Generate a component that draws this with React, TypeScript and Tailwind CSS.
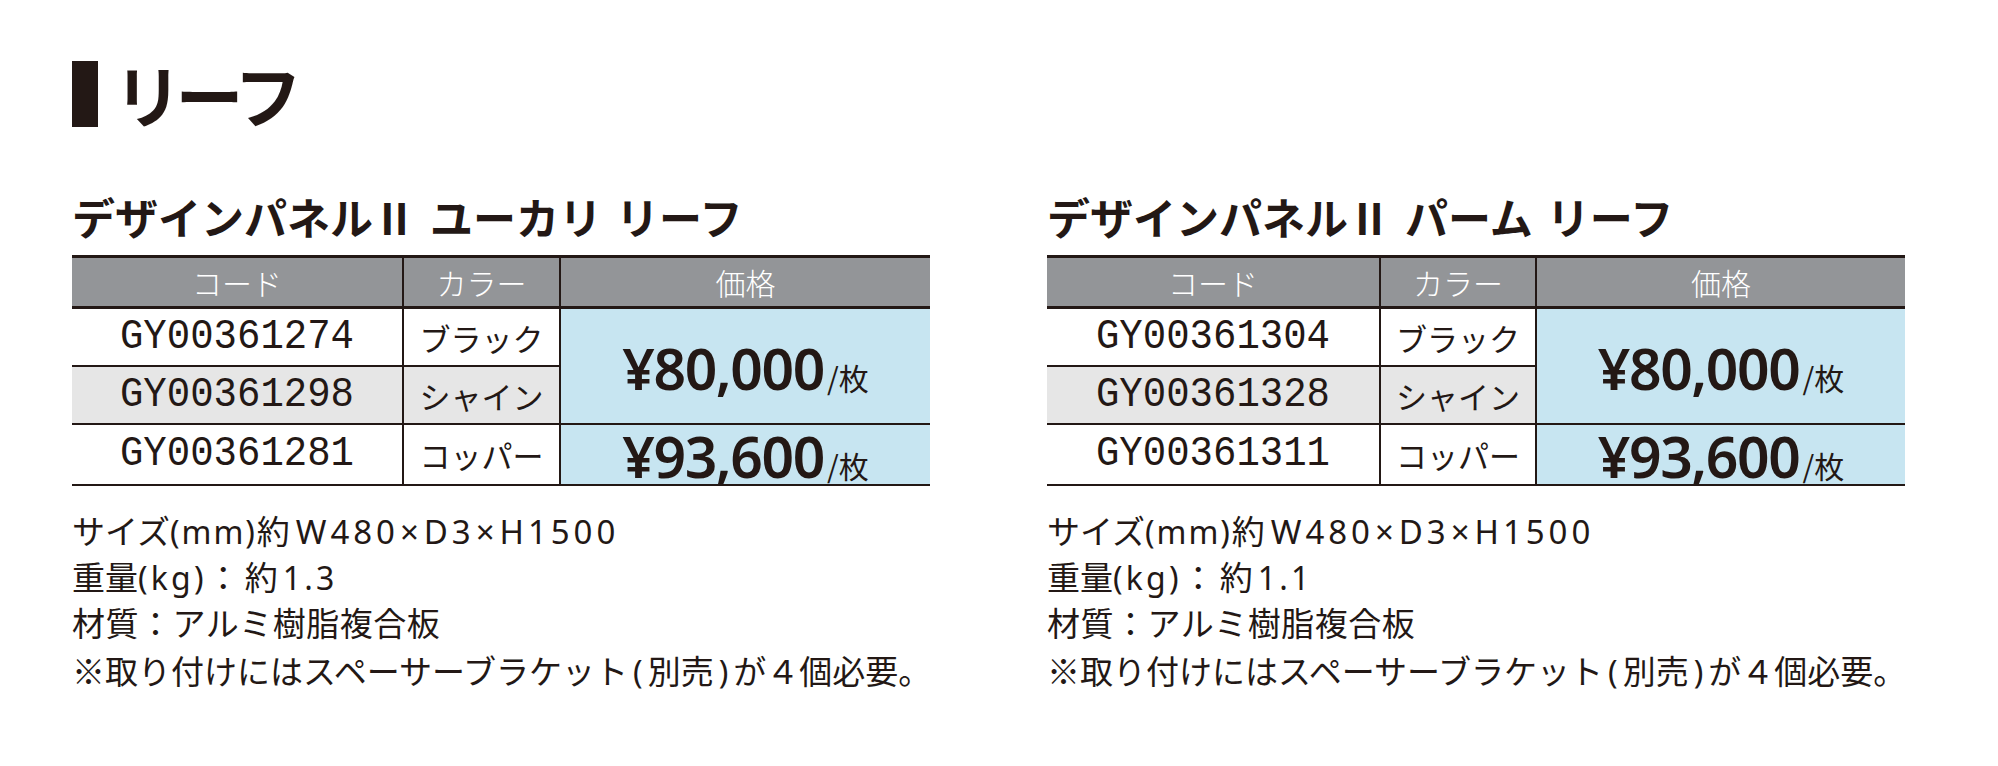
import React from "react";

type Row = { code: string; color: string };

type TableProps = {
  title: string[];
  rows: Row[];
  weight: string;
  codeW: string;
  colorW: string;
  leftW: string;
};

const JP = "font-['Noto_Sans_CJK_JP','Noto_Sans',sans-serif]";
const LAT = "font-['Noto_Sans','Noto_Sans_CJK_JP',sans-serif]";

function Price({ value }: { value: string }) {
  return (
    <div className="flex items-baseline justify-center">
      <span className="font-['Noto_Sans','Noto_Sans_CJK_JP',sans-serif] font-semibold text-[57px] leading-none tracking-[-0.025em]">
        {value}
      </span>
      <span className={`${JP} text-[30px] leading-none ml-[3px]`}>/枚</span>
    </div>
  );
}

function SpecTable({ title, rows, weight, codeW, colorW, leftW }: TableProps) {
  const rowH = ["h-[58px]", "h-[58px]", "h-[61px]"];
  return (
    <div className="flex flex-col w-[858px]">
      <h2 className={`${JP} font-bold text-[43px] leading-none h-[44px] flex gap-[14px]`}>
        {title.map((t) => (
          <span key={t}>{t}</span>
        ))}
      </h2>
      <div className="mt-[16px] border-t-[3px] border-[#231815]">
        <div
          className={`${JP} flex h-[51px] bg-[#939598] border-b-[3px] border-[#231815] text-white text-[30px] font-light leading-none`}
        >
          <div className={`${codeW} flex items-center justify-center border-r-2 border-[#231815]`}>コード</div>
          <div className={`${colorW} flex items-center justify-center border-r-2 border-[#231815]`}>カラー</div>
          <div className="flex-1 flex items-center justify-center">価格</div>
        </div>
        <div className="flex">
          <div className={`${leftW} flex flex-col`}>
            {rows.map((r, i) => (
              <div
                key={r.code}
                className={`flex ${rowH[i]} border-b-2 border-[#231815] ${i === 1 ? "bg-[#e6e6e6]" : "bg-white"}`}
              >
                <div
                  className={`${codeW} flex items-center justify-center border-r-2 border-[#231815] font-['Liberation_Mono','DejaVu_Sans_Mono',monospace] slashed-zero text-[39px] leading-none`}
                >
                  <span className="inline-block scale-y-[1.1]">{r.code}</span>
                </div>
                <div
                  className={`flex-1 flex items-center justify-center border-r-2 border-[#231815] ${JP} text-[31px] leading-none`}
                >
                  {r.color}
                </div>
              </div>
            ))}
          </div>
          <div className="flex-1 flex flex-col bg-[#c7e5f1]">
            <div className="h-[116px] border-b-2 border-[#231815] flex items-center justify-center pt-[4px]">
              <Price value="¥80,000" />
            </div>
            <div className="h-[61px] border-b-2 border-[#231815] flex items-center justify-center pt-[4px]">
              <Price value="¥93,600" />
            </div>
          </div>
        </div>
      </div>
      <div className={`${JP} mt-[22px] text-[33px] leading-[45px] font-normal whitespace-nowrap`}>
        <p>
          サイズ<span className={`${LAT} text-[32px] tracking-[0.06em]`}>(mm)</span>約
          <span className={`${LAT} text-[33px] tracking-[0.12em] ml-[6px]`}>
            W480<span className="mx-[1px]">×</span>D3<span className="mx-[1px]">×</span>H1500
          </span>
        </p>
        <p>
          重量<span className={`${LAT} text-[32px] tracking-[0.1em]`}>(kg)</span>：
          <span className="ml-[5px]">約</span>
          <span className={`${LAT} text-[32px] tracking-[0.1em] ml-[5px]`}>{weight}</span>
        </p>
        <p className="tracking-[0.5px]">材質：アルミ樹脂複合板</p>
        <p className="mt-[3px]">
          ※取り付けにはスペーサーブラケット<span className={`${LAT} text-[32px] mx-[5px]`}>(</span>別売
          <span className={`${LAT} text-[32px] mx-[5px]`}>)</span>が４個必要。
        </p>
      </div>
    </div>
  );
}

export default function App() {
  return (
    <div className="w-[1998px] h-[766px] bg-white text-[#231815] pl-[72px] pt-[61px] overflow-hidden">
      <div className="flex items-center h-[66px]">
        <div className="w-[26px] h-[66px] bg-[#231815]" />
        <div className={`${JP} ml-[20px] font-bold text-[68px] leading-none [font-feature-settings:'palt']`}>
          リーフ
        </div>
      </div>
      <div className="flex gap-[117px] mt-[68px]">
        <SpecTable
          title={["デザインパネルⅡ", "ユーカリ", "リーフ"]}
          rows={[
            { code: "GY00361274", color: "ブラック" },
            { code: "GY00361298", color: "シャイン" },
            { code: "GY00361281", color: "コッパー" },
          ]}
          weight="1.3"
          codeW="w-[332px]"
          colorW="w-[157px]"
          leftW="w-[489px]"
        />
        <SpecTable
          title={["デザインパネルⅡ", "パーム", "リーフ"]}
          rows={[
            { code: "GY00361304", color: "ブラック" },
            { code: "GY00361328", color: "シャイン" },
            { code: "GY00361311", color: "コッパー" },
          ]}
          weight="1.1"
          codeW="w-[334px]"
          colorW="w-[156px]"
          leftW="w-[490px]"
        />
      </div>
    </div>
  );
}
